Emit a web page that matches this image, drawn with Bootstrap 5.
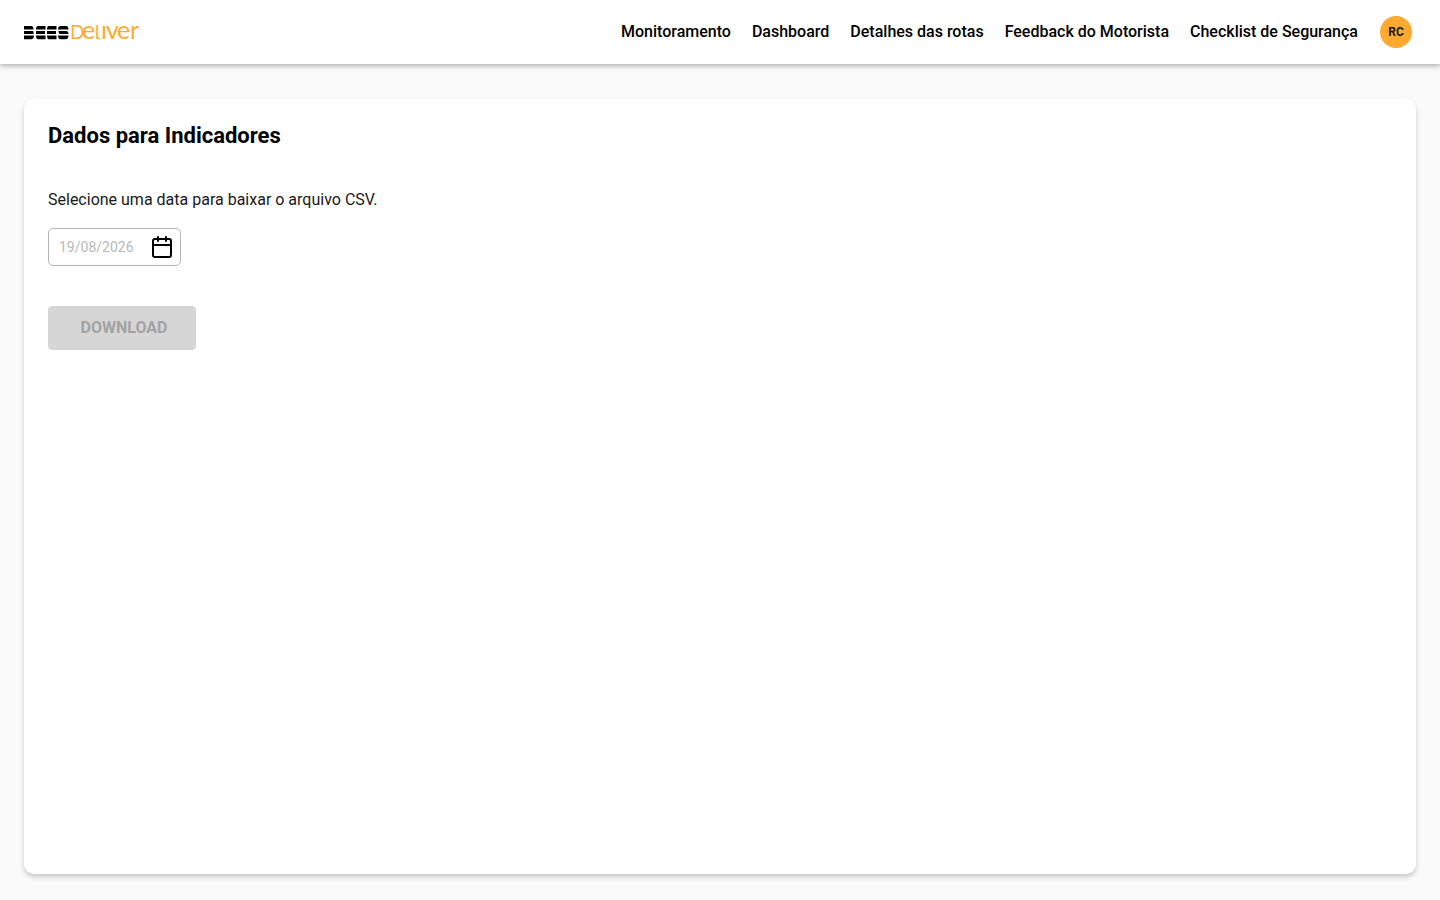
<!DOCTYPE html>
<html lang="pt-BR">
<head>
<meta charset="utf-8">
<meta name="viewport" content="width=device-width, initial-scale=1">
<title>Dados para Indicadores</title>
<link rel="stylesheet" href="https://cdn.jsdelivr.net/npm/bootstrap@5.3.0/dist/css/bootstrap.min.css">
<style>
  body { font-family: Roboto, "Liberation Sans", sans-serif; background: #fafafa; color: #000; }
  .topbar { min-height: 64px; background: #fff; padding: 0 28px 0 24px; box-shadow: 0 2px 5px rgba(0,0,0,.3); }
  .topbar .main-nav .nav-link { color: #000; font-weight: 500; line-height: 24px; padding: 0; }
  .main-nav { gap: 21px; margin-right: 22px; }
  .brand-logo { display: block; }
  .brand-word { font-family: Lato, sans-serif; fill: #ffab33; font-weight: 400; }
  .avatar { width: 32px; height: 32px; background: #ffa930; color: #191919; font-size: 12px; font-weight: 700; }
  .page { padding: 35px 24px 26px; }
  .panel { border-radius: 10px; padding: 24px; box-shadow: 0 3px 5px rgba(0,0,0,.2); }
  .panel-title { font-size: 22px; line-height: 26px; font-weight: 700; margin-bottom: 39px; }
  .hint { color: #191919; line-height: 24px; margin-bottom: 16px; }
  .date-field { width: 133px; height: 38px; border: 1px solid #b5b5b5; border-radius: 5px; padding: 0 6px 0 10px; margin-bottom: 40px; }
  .date-field input { font-size: 14px; line-height: 20px; min-width: 0; background: transparent; }
  .date-field input::placeholder { color: #b9b9b9; opacity: 1; }
  .btn-download { width: 148px; height: 44px; padding: 0 0 0 4px; border-radius: 4px; font-weight: 700; }
  .btn-download:disabled { background: #d6d6d6; border-color: #d6d6d6; color: #a3a3a3; opacity: 1; }
</style>
</head>
<body class="d-flex flex-column min-vh-100">
<header class="topbar navbar navbar-expand flex-nowrap justify-content-between">
  <a href="#" aria-label="BEES Deliver">
    <svg class="brand-logo" width="124" height="40" viewBox="0 -10 124 40">
      <g fill="#000">
        <path d="M0 4h7q2.500 0 2.500 3.400H0zM0 8.900h8.500q1.500 0 1 3.200H0zM0 13.600h10q0 3.700-3 3.700H0z"/>
        <path d="M14 4h7.500v3.400H12q0-3.400 2-3.400zM12 8.900h9v3.200h-9zM12 13.600h9.500v3.700H14q-2 0-2-3.700z"/>
        <path d="M25 4h7.500v3.400H23q0-3.400 2-3.400zM23 8.900h9v3.200h-9zM23 13.600h9.500v3.700H25q-2 0-2-3.700z"/>
        <path d="M37 4h5q2.500 0 2.500 3.400H34q0-3.400 3-3.400zM34.500 8.900H42q2.500 0 2.500 3.200H37q-2.500 0-2.500-3.200zM34 13.600h10.500q0 3.700-3 3.700h-5q-2.500 0-2.500-3.700z"/>
      </g>
      <text class="brand-word" x="46" y="17" font-size="19">D<tspan x="58" font-size="25">e</tspan><tspan x="71" font-size="19">l</tspan><tspan x="77 82 93 106" font-size="25">ıver</tspan></text>
      <path d="M73 15q0 2 3 1.500" fill="none" stroke="#ffab33" stroke-width="1.500"/>
    </svg>
  </a>
  <div class="d-flex align-items-center">
    <nav class="navbar-nav main-nav" aria-label="Principal">
      <a class="nav-link" href="#">Monitoramento</a>
      <a class="nav-link" href="#">Dashboard</a>
      <a class="nav-link" href="#">Detalhes das rotas</a>
      <a class="nav-link" href="#">Feedback do Motorista</a>
      <a class="nav-link" href="#">Checklist de Segurança</a>
    </nav>
    <button type="button" class="avatar btn border-0 rounded-circle p-0 d-flex align-items-center justify-content-center">RC</button>
  </div>
</header>
<main class="page flex-grow-1 d-flex flex-column">
  <section class="panel bg-white flex-grow-1">
    <h1 class="panel-title">Dados para Indicadores</h1>
    <label class="hint d-block" for="data">Selecione uma data para baixar o arquivo CSV.</label>
    <div class="date-field d-flex align-items-center justify-content-between">
      <input id="data" type="text" class="form-control border-0 shadow-none p-0" placeholder="19/08/2026">
      <svg class="flex-shrink-0" width="24" height="24" viewBox="0 0 24 24" fill="none" stroke="#000" stroke-width="2" stroke-linecap="round" stroke-linejoin="round" aria-hidden="true"><rect x="3" y="4" width="18" height="18" rx="2"/><path d="M8 2v4M16 2v4M3 10h18"/></svg>
    </div>
    <button type="button" class="btn btn-download" disabled>DOWNLOAD</button>
  </section>
</main>
<script src="https://cdn.jsdelivr.net/npm/bootstrap@5.3.0/dist/js/bootstrap.bundle.min.js"></script>
</body>
</html>
